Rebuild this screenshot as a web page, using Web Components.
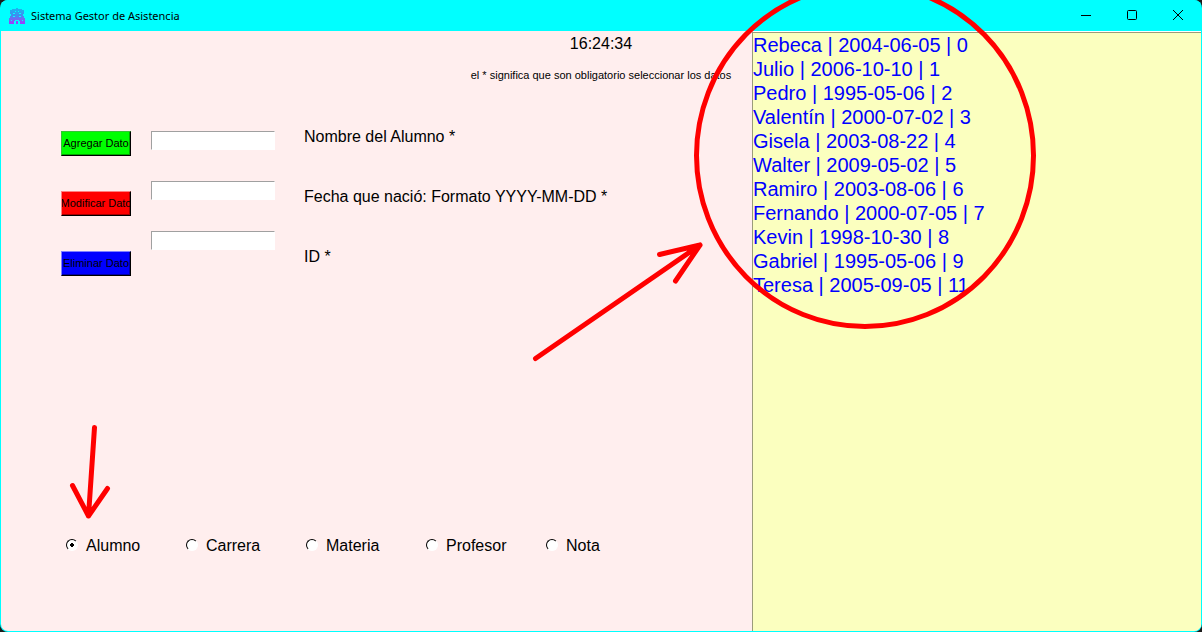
<!DOCTYPE html>
<html lang="es">
<head>
<meta charset="utf-8">
<title>Sistema Gestor de Asistencia</title>
<style>
  body { margin: 0; background: #1c1c1c; font-family: "Liberation Sans", Arial, sans-serif; font-size: 16px; color: #000; }
</style>
</head>
<body>
<app-window>
  <title-bar slot="bar">Sistema Gestor de Asistencia</title-bar>
  <app-header slot="header" time="16:24:34">el * significa que son obligatorio seleccionar los datos</app-header>
  <student-form slot="form"></student-form>
  <kind-picker slot="picker"></kind-picker>
  <record-list slot="list"></record-list>
  <red-marks slot="marks"></red-marks>
</app-window>

<script>
  const define = (name, html, setup) => {
    const template = document.createElement('template');
    template.innerHTML = html;
    customElements.define(name, class extends HTMLElement {
      constructor() {
        super();
        this.attachShadow({ mode: 'open' }).append(template.content.cloneNode(true));
      }
      connectedCallback() { if (setup) setup(this, this.shadowRoot); }
    });
  };

  define('app-window', `
    <style>
      :host { display: flex; flex-direction: column; position: relative; box-sizing: border-box; min-height: 100vh; overflow: hidden; padding: 0 1px 1px; border-radius: 8px; background: #00ffff; }
      main { flex: 1; display: grid; grid-template-columns: 751fr 449fr; grid-template-rows: auto auto 1fr; background: #ffeeee; border-radius: 0 0 7px 7px; overflow: hidden; }
      slot[name=header]::slotted(*) { grid-column: 1 / 3; grid-row: 1; }
      slot[name=form]::slotted(*) { grid-column: 1; grid-row: 2; }
      slot[name=picker]::slotted(*) { grid-column: 1; grid-row: 3; align-self: end; }
      slot[name=list]::slotted(*) { grid-column: 2; grid-row: 1 / 4; }
    </style>
    <slot name="bar"></slot>
    <main>
      <slot name="list"></slot>
      <slot name="header"></slot>
      <slot name="form"></slot>
      <slot name="picker"></slot>
    </main>
    <slot name="marks"></slot>`);

  define('title-bar', `
    <style>
      :host { display: flex; align-items: center; height: 31px; padding-left: 8px; background: #00ffff; font: 11px "Noto Sans", "Open Sans", sans-serif; }
      .logo { width: 16px; height: 16px; margin-right: 6px; }
      .name { flex: 1; }
      button { width: 46px; height: 31px; padding: 0; border: 0; background: none; display: grid; place-items: center; }
      button svg { width: 12px; height: 12px; fill: none; stroke: #000; }
    </style>
    <svg class="logo" viewBox="0 0 16 16" aria-hidden="true">
      <defs><linearGradient id="g" x1="0" y1="0" x2="0" y2="16" gradientUnits="userSpaceOnUse">
        <stop offset="0" stop-color="#18b8f0"/><stop offset=".45" stop-color="#3a90f0"/><stop offset=".75" stop-color="#7c60f4"/><stop offset="1" stop-color="#9a3cff"/>
      </linearGradient></defs>
      <path fill="url(#g)" fill-rule="evenodd" d="M7 0h2v1h4v1h2v4h-1v2h1v2h1v6h-5v-3h-1v-1H6v1H5v3H0v-6h1V8h1V6H1V2h2V1h4zM6 3v1h1V3zM9 3v1h1V3zM4 5v1h2V5zM10 5v1h2V5zM4 8v1h2V8zM10 8v1h2V8zM2 12v1h1v-1zM13 12v1h1v-1zM7 13h2v3H7z"/>
    </svg>
    <span class="name"><slot></slot></span>
    <button aria-label="Minimizar"><svg viewBox="0 0 12 12"><path d="M1 5.5h10"/></svg></button>
    <button aria-label="Maximizar"><svg viewBox="0 0 12 12"><rect x="1.5" y=".5" width="9" height="9" rx="1"/></svg></button>
    <button aria-label="Cerrar"><svg viewBox="0 0 12 12"><path d="M1 0l10 10M11 0L1 10"/></svg></button>`);

  define('app-header', `
    <style>
      :host { display: flex; flex-direction: column; align-items: center; gap: 15px; padding-top: 3px; }
      time { line-height: 20px; }
      p { margin: 0; font-size: 11px; line-height: 12px; }
    </style>
    <time></time>
    <p><slot></slot></p>`,
    (host, root) => { root.querySelector('time').textContent = host.getAttribute('time'); });

  define('student-form', `
    <style>
      :host { display: block; padding: 46px 0 0 60px; }
      form { display: flex; align-items: flex-start; }
      .actions, .fields, .labels { display: flex; flex-direction: column; }
      .actions { gap: 35px; width: 70px; margin: 4px 20px 0 0; }
      .fields { gap: 31px; width: 124px; margin: 4px 29px 0 0; }
      .labels { gap: 40px; line-height: 20px; }
      button { box-sizing: border-box; height: 25px; padding: 0 0 2px; border: 1px solid; border-right-color: #000; border-bottom-color: #000; border-radius: 0; overflow: hidden; display: flex; align-items: center; justify-content: center; font: 11px "Liberation Sans", Arial, sans-serif; color: #000; white-space: nowrap; }
      .add { background: #00ff00; border-top-color: #33c433; border-left-color: #33c433; box-shadow: inset -1px -1px #00a800; }
      .edit { background: #ff0000; border-top-color: #ff8080; border-left-color: #ff8080; box-shadow: inset -1px -1px #a80000; }
      .remove { background: #0000ff; border-top-color: #8080ff; border-left-color: #8080ff; box-shadow: inset -1px -1px #0000a8; }
      input { box-sizing: border-box; width: 100%; height: 19px; margin: 0; padding: 0 2px; border: 1px solid #fff; border-top-color: #a0a0a0; border-left-color: #a0a0a0; background: #fff; font: 11px "Liberation Sans", Arial, sans-serif; }
    </style>
    <form>
      <div class="actions">
        <button type="button" class="add">Agregar Dato</button>
        <button type="button" class="edit">Modificar Dato</button>
        <button type="button" class="remove">Eliminar Dato</button>
      </div>
      <div class="fields">
        <input id="name"><input id="birth"><input id="id">
      </div>
      <div class="labels">
        <label for="name">Nombre del Alumno *</label>
        <label for="birth">Fecha que nació: Formato YYYY-MM-DD *</label>
        <label for="id">ID *</label>
      </div>
    </form>`);

  define('kind-picker', `
    <style>
      :host { display: block; padding: 0 0 75px 65px; }
      fieldset { display: grid; grid-template-columns: repeat(5, 120px); margin: 0; padding: 0; border: 0; }
      label { display: flex; align-items: center; gap: 8px; line-height: 20px; }
      input { appearance: none; box-sizing: border-box; width: 12px; height: 12px; margin: 0 0 2px; border: 1px solid; border-color: #000 #fff #fff #000; border-radius: 50%; background: #fff; }
      input:checked { background: radial-gradient(circle, #000 0 2px, #fff 2px); }
    </style>
    <fieldset aria-label="Tabla">
      <label><input type="radio" name="kind" checked>Alumno</label>
      <label><input type="radio" name="kind">Carrera</label>
      <label><input type="radio" name="kind">Materia</label>
      <label><input type="radio" name="kind">Profesor</label>
      <label><input type="radio" name="kind">Nota</label>
    </fieldset>`);

  define('record-list', `
    <style>
      :host { display: block; margin-top: 1px; border: 1px solid #9a9c7a; border-width: 1px 0 0 1px; background: #fbffbf; box-shadow: 0 -1px #fff; }
      ul { margin: 0; padding: 0; list-style: none; font-size: 20px; line-height: 24px; color: #0000ff; }
    </style>
    <ul></ul>`,
    (host, root) => {
      const rows = [
        ['Rebeca', '2004-06-05', 0], ['Julio', '2006-10-10', 1], ['Pedro', '1995-05-06', 2],
        ['Valentín', '2000-07-02', 3], ['Gisela', '2003-08-22', 4], ['Walter', '2009-05-02', 5],
        ['Ramiro', '2003-08-06', 6], ['Fernando', '2000-07-05', 7], ['Kevin', '1998-10-30', 8],
        ['Gabriel', '1995-05-06', 9], ['Teresa', '2005-09-05', 11]
      ];
      root.querySelector('ul').replaceChildren(...rows.map(row => {
        const item = document.createElement('li');
        item.textContent = row.join(' | ');
        return item;
      }));
    });

  define('red-marks', `
    <style>
      :host { position: absolute; top: 0; left: 0; pointer-events: none; }
      svg { display: block; fill: none; stroke: #ff0000; stroke-width: 5; stroke-linecap: round; stroke-linejoin: round; }
    </style>
    <svg width="1040" height="530" aria-hidden="true">
      <ellipse cx="865" cy="155.5" rx="168.5" ry="171"/>
      <path d="M535.5 358.5L700 245M659.5 254.5L700 245L675.5 281"/>
      <path d="M94.5 427.5L88.500 516M72.5 485.5L88.5 516L107.5 488.5"/>
    </svg>`);
</script>
</body>
</html>
